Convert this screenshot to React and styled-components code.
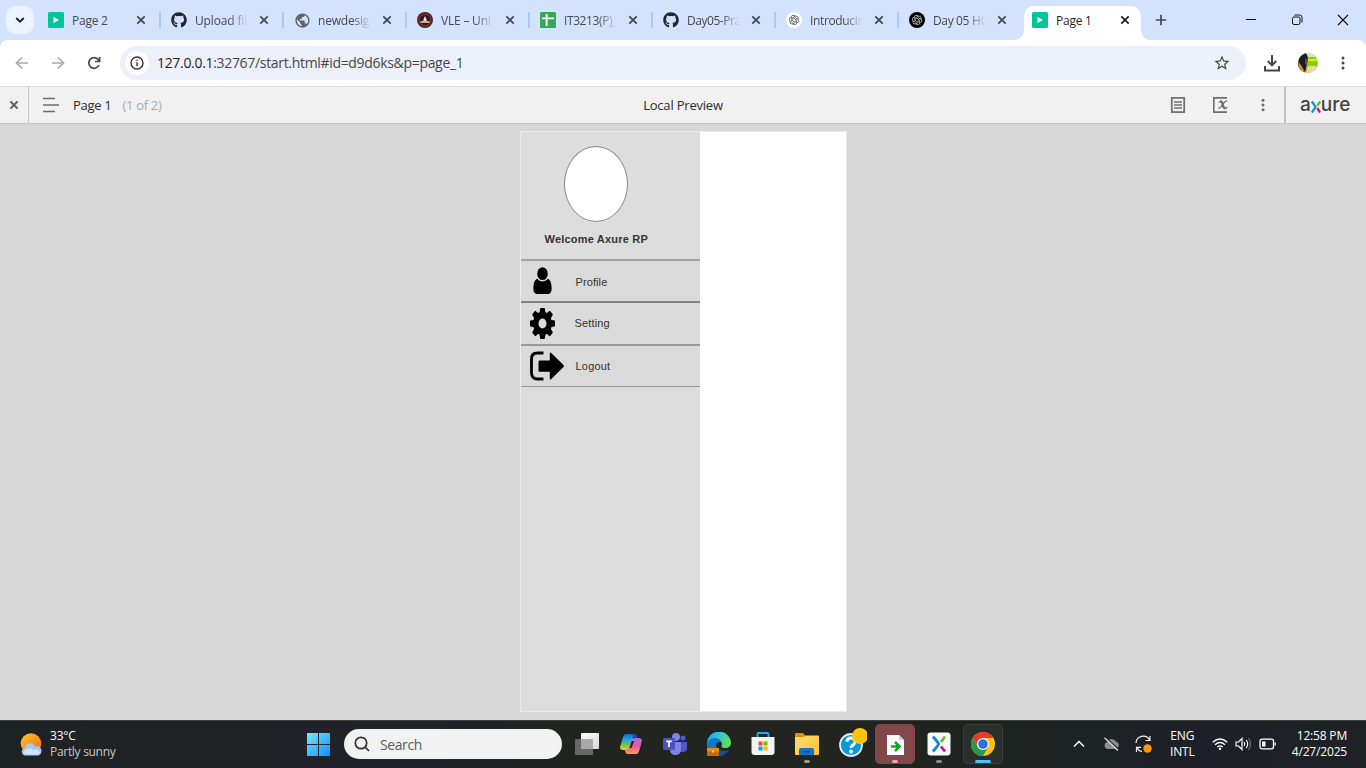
import React from "react";
import styled, { createGlobalStyle, css } from "styled-components";
import { FaGithub } from "react-icons/fa";
import { RiOpenaiFill } from "react-icons/ri";
import { MdPublic, MdStarBorder } from "react-icons/md";

const Global = createGlobalStyle`
  *, *::before, *::after { box-sizing: border-box; }
  html, body { margin: 0; padding: 0; overflow: hidden; }
  body { font-family: "Open Sans", "Noto Sans", sans-serif; font-size: 12px; color: #1f1f1f; }
  svg { display: block; flex: none; }
`;

const Screen = styled.div`
  width: 1366px;
  height: 768px;
  display: flex;
  flex-direction: column;
  overflow: hidden;
  background: #d7d7d7;
`;

/* ---------- tab strip ---------- */
const TabStrip = styled.header`
  height: 40px;
  display: flex;
  align-items: flex-start;
  padding: 6px 0 0 6px;
  background: #d3e2fd;
`;
const TabSearch = styled.div`
  width: 28px;
  height: 28px;
  margin-right: 6px;
  border-radius: 10px;
  background: #ecf2fe;
  display: grid;
  place-items: center;
`;
const TabBox = styled.div`
  position: relative;
  width: 123px;
  height: 34px;
  padding: 0 0 6px 8px;
  display: flex;
  align-items: center;
  ${(p) =>
    p.$active &&
    css`
      width: 117px;
      background: #fff;
      border-radius: 10px 10px 0 0;
      &::before,
      &::after {
        content: "";
        position: absolute;
        bottom: 0;
        width: 10px;
        height: 10px;
      }
      &::before {
        left: -10px;
        background: radial-gradient(circle at 0 0, transparent 9.5px, #fff 10.5px);
      }
      &::after {
        right: -10px;
        background: radial-gradient(circle at 100% 0, transparent 9.5px, #fff 10.5px);
      }
    `}
`;
const Favicon = styled.span`
  width: 16px;
  height: 16px;
  margin-right: 8px;
  flex: none;
`;
const TabTitle = styled.span`
  width: 53px;
  flex: none;
  white-space: nowrap;
  line-height: 18px;
  padding-top: 1px;
  font-size: 12px;
  letter-spacing: ${(p) => p.$ls}px;
  color: ${(p) => (p.$active ? "#1f1f1f" : "#46494d")};
  mask-image: ${(p) => (p.$fade ? "linear-gradient(90deg, #000 65%, transparent 100%)" : "none")};
`;
const TabClose = styled.span`
  margin-left: 8px;
`;
const Separator = styled.i`
  width: 2px;
  height: 16px;
  margin-left: 10px;
  border-radius: 1px;
  background: #a8c7fa;
`;
const NewTab = styled.span`
  margin: 8px 0 0 14px;
`;
const WindowControls = styled.div`
  margin-left: auto;
  display: flex;
  gap: 34px;
  padding: 8px 17px 0 0;
`;

/* ---------- address bar ---------- */
const ToolbarBack = styled.div`
  height: 46px;
  background: #d3e2fd;
`;
const Toolbar = styled.div`
  height: 46px;
  background: #fff;
  display: flex;
  align-items: center;
  padding-left: 14px;
  border-radius: 8px 8px 0 0;
`;
const NavIcons = styled.div`
  display: flex;
  gap: 20px;
  width: 106px;
`;
const AddressBar = styled.div`
  width: 1126px;
  height: 34px;
  border-radius: 17px;
  background: #ecf0fa;
  display: flex;
  align-items: center;
  padding: 0 15px 0 5px;
`;
const SiteInfo = styled.span`
  width: 24px;
  height: 24px;
  border-radius: 50%;
  background: #fff;
  display: grid;
  place-items: center;
`;
const Url = styled.span`
  margin-left: 8px;
  padding-bottom: 2px;
  flex: 1;
  font-size: 14px;
  letter-spacing: -0.32px;
  color: #474747;
  b {
    font-weight: 400;
    color: #1f1f1f;
  }
`;
const ToolbarActions = styled.div`
  display: flex;
  align-items: center;
  margin-left: 17px;
  gap: 17px;
`;

/* ---------- preview bar ---------- */
const PreviewBar = styled.div`
  height: 38px;
  border-top: 1px solid #dadada;
  border-bottom: 1px solid #c6c6c6;
  background: #f1f1f1;
  display: grid;
  grid-template-columns: 1fr auto 1fr;
  align-items: stretch;
  font-size: 13px;
`;
const BarSide = styled.div`
  display: flex;
  align-items: center;
  justify-content: ${(p) => (p.$end ? "flex-end" : "flex-start")};
`;
const ClosePane = styled.div`
  width: 29px;
  height: 100%;
  margin-right: 14px;
  border-right: 1px solid #c6c6c6;
  display: grid;
  place-items: center;
`;
const PageName = styled.span`
  margin-left: 14px;
  color: #2c2c2c;
  letter-spacing: -0.3px;
`;
const PageCount = styled.span`
  margin-left: 11px;
  color: #a5acb0;
  letter-spacing: -0.3px;
`;
const BarTitle = styled.span`
  align-self: center;
  color: #2c2c2c;
  letter-spacing: -0.2px;
`;
const BarTools = styled.div`
  display: flex;
  align-items: center;
  gap: 26px;
  padding-right: 13px;
`;
const Brand = styled.div`
  width: 82px;
  height: 100%;
  border-left: 2px solid #c0c0c0;
  display: flex;
  align-items: center;
  padding: 0 0 1px 14px;
  font: 500 19px/19px "Inter", sans-serif;
  letter-spacing: 0;
  color: #424346;
`;
const BrandMark = styled.span`
  padding-top: 4px;
`;

/* ---------- prototype canvas ---------- */
const Canvas = styled.main`
  height: 596px;
  display: flex;
  justify-content: center;
  padding-top: 7px;
  background: #d7d7d7;
`;
const Phone = styled.section`
  width: 327px;
  height: 581px;
  background: #fff;
  border: 1px solid #ececec;
`;
const Drawer = styled.aside`
  width: 179px;
  height: 579px;
  background: #ddd;
  display: flex;
  flex-direction: column;
`;
const DrawerHeader = styled.div`
  height: 127px;
  padding: 14px 0 0 43px;
`;
const Avatar = styled.div`
  width: 64px;
  height: 76px;
  border: 1px solid #868686;
  border-radius: 50%;
  background: #fff;
`;
const Welcome = styled.div`
  margin: 10px 0 0 -19px;
  font: bold 11px/14px "Liberation Sans", Arial, sans-serif;
  letter-spacing: 0.2px;
  white-space: nowrap;
  color: #333;
`;
const MenuItem = styled.div`
  height: ${(p) => p.$h}px;
  border-top: ${(p) => p.$line}px solid ${(p) => p.$tone};
  background: #dadada;
  display: flex;
  align-items: center;
  padding-left: 9px;
`;
const MenuIcon = styled.span`
  width: 45px;
  display: flex;
  padding-left: ${(p) => p.$inset || 0}px;
`;
const MenuLabel = styled.span`
  font: 11px/14px "Liberation Sans", Arial, sans-serif;
  letter-spacing: ${(p) => p.$ls}px;
  padding: ${(p) => p.$pad || "0"};
  color: #333;
`;
const MenuEnd = styled.div`
  height: 1px;
  background: #959595;
`;

/* ---------- taskbar ---------- */
const Taskbar = styled.footer`
  height: 48px;
  background: linear-gradient(90deg, #1d2322, #212227 20%, #202327 32%, #21241f 42%, #22241f 60%, #1e2421 75%, #1d2028 88%, #1e2225);
  box-shadow: inset 0 1px #3a3d3c;
  display: flex;
  align-items: center;
  color: #fff;
`;
const Weather = styled.div`
  width: 306px;
  display: flex;
  align-items: center;
  padding-left: 20px;
  gap: 7px;
`;
const TwoLine = styled.div`
  display: flex;
  flex-direction: column;
  align-items: ${(p) => p.$align || "flex-start"};
  font-size: 12px;
  line-height: 16px;
  white-space: nowrap;
  letter-spacing: ${(p) => p.$ls || 0}px;
`;
const Muted = styled.span`
  color: #c8c9c9;
  letter-spacing: -0.3px;
`;
const SearchBox = styled.div`
  width: 218px;
  height: 30px;
  margin-left: 14px;
  border-radius: 15px;
  background: #f2f2f2;
  display: flex;
  align-items: center;
  gap: 10px;
  padding-left: 10px;
  font-size: 14px;
  letter-spacing: -0.4px;
  color: #5c5c5c;
`;
const Apps = styled.div`
  display: flex;
  gap: 4px;
  margin-left: 5px;
`;
const AppSlot = styled.div`
  position: relative;
  width: 40px;
  height: 40px;
  border-radius: 5px;
  display: grid;
  place-items: center;
  background: ${(p) => p.$bg || "transparent"};
  box-shadow: ${(p) => (p.$ring ? "inset 0 0 0 1px #3c403c" : "none")};
  &::after {
    content: "";
    position: absolute;
    left: 50%;
    bottom: 1px;
    height: 3px;
    width: ${(p) => p.$markW || 6}px;
    transform: translateX(-50%);
    border-radius: 2px;
    background: ${(p) => p.$mark || "transparent"};
  }
`;
const Tray = styled.div`
  margin-left: auto;
  display: flex;
  align-items: center;
  padding-right: 19px;
`;
const TrayIcon = styled.span`
  margin-right: ${(p) => p.$gap}px;
`;
const TrayText = styled.div`
  margin-right: ${(p) => p.$gap}px;
`;

/* ---------- icons ---------- */
const Cross = ({ color = "#46494d", size = 16, w = 1.8, r = 3.7 }) => (
  <svg width={size} height={size} viewBox="-8 -8 16 16" stroke={color} strokeWidth={w}>
    <path d={`M${-r} ${-r}L${r} ${r}M${r} ${-r}L${-r} ${r}`} />
  </svg>
);
const Dots = ({ r = 1.5, gap = 5, color = "#474747" }) => (
  <svg width="16" height="16" viewBox="-8 -8 16 16" fill={color}>
    {[-gap, 0, gap].map((y) => (
      <circle key={y} cy={y} r={r} />
    ))}
  </svg>
);
const AxureFav = () => (
  <svg width="16" height="16" viewBox="0 0 16 16">
    <rect width="16" height="16" rx="1.5" fill="#00c49a" />
    <path d="M5.5 5v6L11 8z" fill="#fff" />
  </svg>
);
const VleFav = () => (
  <svg width="16" height="16" viewBox="0 0 16 16">
    <circle cx="8" cy="8" r="8" fill="#5c1f25" />
    <circle cx="8" cy="8" r="5.8" fill="#33162a" stroke="#8c5a45" strokeWidth=".6" />
    <path d="M8 3.5L5.6 9h4.8z" fill="#c98f3e" />
    <path d="M3.5 9.2h9v1.6h-9z" fill="#f1d7b0" />
    <path d="M7.2 5.7h1.6v3.3H7.2z" fill="#fff" />
  </svg>
);
const SheetFav = () => (
  <svg width="16" height="16" viewBox="0 0 16 16">
    <rect width="16" height="16" rx="1.5" fill="#34a853" />
    <path d="M2 6.3h12M6.6 2v12" stroke="#fff" strokeWidth="1.8" />
  </svg>
);
const OpenAiFav = ({ dark }) => (
  <svg width="16" height="16" viewBox="0 0 16 16">
    <circle cx="8" cy="8" r="8" fill={dark ? "#000" : "#fff"} />
    <RiOpenaiFill x="2" y="2" size={12} color={dark ? "#d8d8d8" : "#444"} />
  </svg>
);
const PersonIcon = () => (
  <svg width="19" height="28" viewBox="0 0 19 28">
    <ellipse cx="9.5" cy="6.7" rx="5.3" ry="6.4" />
    <path d="M4.3 11.800C1.500 12.700 0.400 16.800 0.400 21.500 0.400 25.300 2 27 4.500 27H14.500C17 27 18.600 25.300 18.600 21.500 18.600 16.800 17.500 12.700 14.700 11.800 13.300 13.500 11.500 14.400 9.500 14.400S5.700 13.500 4.300 11.800Z" />
  </svg>
);
const GearIcon = () => (
  <svg width="25" height="31" viewBox="-12 -12 24 24" preserveAspectRatio="none">
    <circle r="6.500" fill="none" stroke="#000" strokeWidth="5.200" />
    {[0, 45, 90, 135, 180, 225, 270, 315].map((a) => (
      <path key={a} transform={`rotate(${a})`} d="M-2.900 -7.500L-2.300 -11.500Q-2.200 -12 -1.700 -12H1.700Q2.200 -12 2.300 -11.500L2.900 -7.500Z" />
    ))}
  </svg>
);
const LogoutIcon = () => (
  <svg width="34" height="30" viewBox="0 0 34 30">
    <path d="M13.500 2H7.500Q1.500 2 1.500 8V21.500Q1.500 28 7.500 28H13.500" fill="none" stroke="#000" strokeWidth="2.800" />
    <path d="M9.600 9.500H19.800V2.500Q19.800 .7 21.300 2L33.500 14Q34.200 15 33.500 16L21.300 28Q19.800 29.300 19.800 27.500V20.700H9.600Q8.500 20.700 8.500 19.500V10.700Q8.500 9.500 9.600 9.500Z" />
  </svg>
);
const BrandX = () => (
  <svg width="10" height="12" viewBox="0 0 10 12" strokeWidth="2.300" fill="none">
    <path d="M.8 .5L4 5.200Q4.600 6 4 6.800L.8 11.500" stroke="#009cd9" />
    <path d="M9.200 .5L6.200 5" stroke="#6eb82c" />
    <path d="M6.200 7L9.200 11.500" stroke="#e4067e" />
  </svg>
);

const tabs = [
  { icon: <AxureFav />, title: "Page 2", ls: -0.25 },
  { icon: <FaGithub size={16} color="#22272e" />, title: "Upload fil", fade: true, ls: -0.15 },
  { icon: <MdPublic size={17} color="#5f6368" />, title: "newdesig", fade: true, ls: -0.2 },
  { icon: <VleFav />, title: "VLE – Uni", fade: true, ls: -0.2 },
  { icon: <SheetFav />, title: "IT3213(P)_", fade: true, ls: -0.4 },
  { icon: <FaGithub size={16} color="#22272e" />, title: "Day05-Pra", fade: true, ls: -0.45 },
  { icon: <OpenAiFav />, title: "Introducin", fade: true, ls: -0.35 },
  { icon: <OpenAiFav dark />, title: "Day 05 HC", fade: true, last: true, ls: -0.35 },
  { icon: <AxureFav />, title: "Page 1", active: true, ls: -0.25 },
];

function Tab({ icon, title, fade, active, last, ls }) {
  return (
    <TabBox $active={active}>
      <Favicon>{icon}</Favicon>
      <TabTitle $fade={fade} $active={active} $ls={ls}>{title}</TabTitle>
      <TabClose><Cross color={active ? "#1f1f1f" : "#46494d"} /></TabClose>
      {!active && !last && <Separator />}
    </TabBox>
  );
}

const TopChrome = () => (
  <>
    <TabStrip>
      <TabSearch>
        <svg width="10" height="6" viewBox="0 0 10 6" fill="none" stroke="#1f1f1f" strokeWidth="1.800"><path d="M1.200 1L5 4.700 8.800 1" /></svg>
      </TabSearch>
      {tabs.map((t) => <Tab key={t.title} {...t} />)}
      <NewTab>
        <svg width="12" height="12" viewBox="0 0 12 12" stroke="#474747" strokeWidth="1.700"><path d="M6 .8v10.400M.8 6h10.400" /></svg>
      </NewTab>
      <WindowControls>
        <svg width="12" height="12" viewBox="0 0 12 12" stroke="#111"><path d="M1 5.500h10" /></svg>
        <svg width="12" height="12" viewBox="0 0 12 12" stroke="#111" fill="none"><rect x="1.500" y="3" width="7.500" height="7.500" rx="1.500" /><path d="M3.500 1H8.500Q11 1 11 3.500V8.500" /></svg>
        <svg width="12" height="12" viewBox="0 0 12 12" stroke="#111" strokeWidth="1.100"><path d="M1 1l10 10M11 1L1 11" /></svg>
      </WindowControls>
    </TabStrip>
    <ToolbarBack>
      <Toolbar>
        <NavIcons>
          <svg width="16" height="16" viewBox="0 0 16 16" fill="none" stroke="#a9a9a9" strokeWidth="1.700"><path d="M14 8H3M8 2.500L2.500 8 8 13.500" /></svg>
          <svg width="16" height="16" viewBox="0 0 16 16" fill="none" stroke="#a9a9a9" strokeWidth="1.700"><path d="M2 8h11M8 2.500L13.500 8 8 13.500" /></svg>
          <svg width="16" height="16" viewBox="0 0 16 16" fill="none" stroke="#474747" strokeWidth="1.700"><path d="M13 10A5.300 5.300 0 1 1 12.300 4.800L13.400 6.200M13.600 2V6.500H9" /></svg>
        </NavIcons>
        <AddressBar>
          <SiteInfo>
            <svg width="14" height="14" viewBox="0 0 14 14" fill="none" stroke="#333" strokeWidth="1.400"><circle cx="7" cy="7" r="6" /><path d="M7 6.200v4M7 3.700v1.300" /></svg>
          </SiteInfo>
          <Url><b>127.0.0.1</b>:32767/start.html#id=d9d6ks&amp;p=page_1</Url>
          <MdStarBorder size={18} color="#474747" />
        </AddressBar>
        <ToolbarActions>
          <svg width="18" height="18" viewBox="0 0 18 18" fill="none" stroke="#474747" strokeWidth="2"><path d="M9 1v10M4.700 7L9 11.300 13.300 7M2 12v4.500h14V12" /></svg>
          <svg width="20" height="20" viewBox="0 0 20 20">
            <defs><clipPath id="face"><circle cx="10" cy="10" r="10" /></clipPath></defs>
            <g clipPath="url(#face)">
              <rect width="20" height="20" fill="#86cf14" />
              <path d="M8 0h12v4H8z" fill="#d9e8b8" />
              <path d="M9 6h11v2H9z" fill="#d2f41d" />
              <path d="M10 13q5-1 10 1v6H8z" fill="#f6cfa4" />
              <path d="M0 0h8q3 5 1 10l-2 10H0z" fill="#171b25" />
              <path d="M7 4q3 3 2 7l-2 1z" fill="#9b3430" />
              <path d="M0 8l3 4 4 7-5-1z" fill="#d98b36" />
            </g>
          </svg>
          <Dots />
        </ToolbarActions>
      </Toolbar>
    </ToolbarBack>
  </>
);

const Preview = () => (
  <PreviewBar>
    <BarSide>
      <ClosePane><Cross color="#5a5a5a" w={2} r={3.6} /></ClosePane>
      <svg width="16" height="16" viewBox="0 0 16 16" stroke="#6d6d6d" strokeWidth="1.700"><path d="M0 1.500h12M0 8h16M0 14.500h12" /></svg>
      <PageName>Page 1</PageName>
      <PageCount>(1 of 2)</PageCount>
    </BarSide>
    <BarTitle>Local Preview</BarTitle>
    <BarSide $end>
      <BarTools>
        <svg width="16" height="16" viewBox="0 0 16 16" fill="none" stroke="#6d6d6d" strokeWidth="1.700"><rect x="1.800" y=".9" width="12.400" height="14.200" /><path d="M4 5h8M4 8h8M4 11h8" strokeWidth="1.400" /></svg>
        <svg width="17" height="16" viewBox="0 0 17 16" fill="none" stroke="#6d6d6d" strokeWidth="1.600"><path d="M15 .9H1.800v14.200H15" /><path d="M8.300 4.400Q10 4 10.600 7.500T13.300 11.400" strokeWidth="2.200" /><path d="M15.300 4.500Q13.400 3.300 11 7.200T6.300 11.200M6.800 5.600Q7.400 4.500 8.800 4.400M13 11.600Q14.500 11.500 15.200 10" strokeWidth="1.200" /></svg>
        <Dots gap={4.700} color="#6d6d6d" />
      </BarTools>
      <Brand>a<BrandMark><BrandX /></BrandMark>ure</Brand>
    </BarSide>
  </PreviewBar>
);

const Prototype = () => (
  <Canvas>
    <Phone>
      <Drawer>
        <DrawerHeader>
          <Avatar />
          <Welcome>Welcome Axure RP</Welcome>
        </DrawerHeader>
        <MenuItem $h={42} $line={2} $tone="#a3a3a3"><MenuIcon $inset={3}><PersonIcon /></MenuIcon><MenuLabel $ls={0.1} $pad="2px 0 0 1px">Profile</MenuLabel></MenuItem>
        <MenuItem $h={43} $line={2} $tone="#838383"><MenuIcon><GearIcon /></MenuIcon><MenuLabel $ls={0.15} $pad="0 0 2px">Setting</MenuLabel></MenuItem>
        <MenuItem $h={42} $line={2} $tone="#999"><MenuIcon><LogoutIcon /></MenuIcon><MenuLabel $ls={0.2} $pad="0 0 0 1px">Logout</MenuLabel></MenuItem>
        <MenuEnd />
      </Drawer>
    </Phone>
  </Canvas>
);

const Gradient = ({ id, stops, x2 = 1, y2 = 1 }) => (
  <linearGradient id={id} x1="0" y1="0" x2={x2} y2={y2}>
    {stops.map((c, i) => <stop key={i} offset={i / (stops.length - 1)} stopColor={c} />)}
  </linearGradient>
);

const TaskApps = () => (
  <Apps>
    <AppSlot>
      <svg width="24" height="22" viewBox="0 0 24 22"><defs><Gradient id="tv" stops={["#fff", "#d8d8d8"]} /></defs><rect x="6" width="18" height="16" rx="1" fill="url(#tv)" /><rect y="6" width="18" height="16" rx="1" fill="#686868" /><path d="M6 6h12v10H6z" fill="#a9a9a9" /></svg>
    </AppSlot>
    <AppSlot>
      <svg width="22" height="22" viewBox="0 0 22 22">
        <defs><Gradient id="cpa" x2={0} stops={["#1b62d8", "#18a5dd", "#6fbe59", "#f5cc20"]} /><Gradient id="cpb" x2={0} stops={["#a86ae8", "#e85aa0", "#ff9955"]} /></defs>
        <path d="M6 1h8q2 0 2.600 2l.8 2.500h-4L10 14q-.8 3-4 3H3q-4 0-2.700-4L3.200 3.500Q4 1 6 1z" fill="url(#cpa)" />
        <path d="M13 1h1q2 0 2.600 2l1 3.200h-5z" fill="#194ab3" />
        <path d="M16 21H8q-2 0-2.600-2L4.700 17q3.500 0 4.600-3l2.400-7q.9-2 3.500-2h3.500q4 0 3 4l-2.700 9.500Q18 21 16 21z" fill="url(#cpb)" />
        <path d="M9.500 15l2.300-7h2.400l-2.700 7z" fill="#282328" />
      </svg>
    </AppSlot>
    <AppSlot>
      <svg width="24" height="22" viewBox="0 0 24 22"><circle cx="13" cy="4" r="4" fill="#7b83eb" /><circle cx="20" cy="5" r="2.600" fill="#5059c9" /><path d="M17 9h7v6q0 4-4 4h-3z" fill="#5059c9" /><path d="M7 9h11v7q0 6-5.500 6T7 16z" fill="#7b83eb" /><rect y="5" width="12" height="12" rx="1" fill="#4b53bc" /><path d="M3.200 8.300h5.600M6 8v6" stroke="#fff" strokeWidth="1.700" /></svg>
    </AppSlot>
    <AppSlot>
      <svg width="24" height="24" viewBox="0 0 24 24">
        <defs><Gradient id="ed" y2={0.3} stops={["#1a9fe0", "#35c1e0", "#62dd55"]} /></defs>
        <path d="M0 12A12 12 0 0 1 24 11Q24 16 18 16 14 16 14.500 13.500 16 12 14 10 11 7.500 7 9 2 11 1 18 0 15 0 12z" fill="url(#ed)" />
        <path d="M.3 14Q0 7 7 6q5-.5 7.500 4-4-1-5.500 3-1 5 4 8l2 2.600Q10 25 5 21.500 1 18 .3 14z" fill="#1277c9" />
        <path d="M10 12q-1 6 6 7 4 0 6.500-1.500Q19 24 12 24 7 19 10 12z" fill="#124f9c" />
        <rect y="16" width="12" height="8" fill="#c46b0b" /><path d="M0 16h12v3.500H0z" fill="#e68e16" /><path d="M5 18.500h2v2H5z" fill="#ffd250" />
      </svg>
    </AppSlot>
    <AppSlot>
      <svg width="24" height="24" viewBox="0 0 24 24"><path d="M6.500 6V2q0-1 1-1h9q1 0 1 1v4" fill="none" stroke="#23a8ea" strokeWidth="2" /><path d="M.5 5h23v15q0 3-3 3h-17q-3 0-3-3z" fill="#f4f4f4" /><path d="M7.500 9.500h4v4h-4z" fill="#f25022" /><path d="M12.500 9.500h4v4h-4z" fill="#7fba00" /><path d="M7.500 14.500h4v4h-4z" fill="#00a4ef" /><path d="M12.500 14.500h4v4h-4z" fill="#ffb900" /></svg>
    </AppSlot>
    <AppSlot $mark="#9a9a9a">
      <svg width="24" height="22" viewBox="0 0 24 22"><defs><Gradient id="fo" stops={["#ffdd79", "#fcc02b"]} /></defs><path d="M0 1q0-1 1-1h7l2.500 3H23q1 0 1 1v8H0z" fill="#d99300" /><path d="M0 4h9l1.500-1.500H23q1 0 1 1V21q0 1-1 1H1q-1 0-1-1z" fill="url(#fo)" /><path d="M4 22v-5q0-2 2-2h11q2 0 2 2v5z" fill="#1473c9" /><path d="M8 18h7v1.500H8z" fill="#0b559f" /></svg>
    </AppSlot>
    <AppSlot>
      <svg width="32" height="32" viewBox="0 0 32 32"><circle cx="16" cy="17" r="11" fill="#0898da" stroke="#d9eef8" strokeWidth="1.800" /><path d="M12 13.700Q12 10 16 10t4 3.500q0 2-2 3.500t-2 3" fill="none" stroke="#fff" strokeWidth="3" /><circle cx="16" cy="23.500" r="1.900" fill="#fff" /><circle cx="25" cy="8" r="8" fill="#ffc20e" /></svg>
    </AppSlot>
    <AppSlot $bg="#81474b" $mark="#ff9ba3">
      <svg width="17" height="22" viewBox="0 -2 17 22"><path d="M0 0h12l5 5v15H0z" fill="#fff" /><path d="M12 0v5h5z" fill="#cfcfcf" /><path d="M4 11.500h8M8 7l4.500 4.500L8 16" fill="none" stroke="#10a51c" strokeWidth="2.600" /></svg>
    </AppSlot>
    <AppSlot $mark="#8c8c8c">
      <svg width="24" height="24" viewBox="0 0 24 24" fill="none" strokeWidth="2.800"><rect x=".5" y=".5" width="23" height="23" rx="3" fill="#f8fafb" /><path d="M6 4.500L11.300 11q.8 1 0 2L6 19.500" stroke="#1688c8" /><path d="M18 4.500L14 10" stroke="#6eb82c" /><path d="M14 14.500l4 5" stroke="#e4067e" /></svg>
    </AppSlot>
    <AppSlot $bg="#2b2f2b" $ring $mark="#4cc2ff" $markW={16}>
      <svg width="24" height="24" viewBox="0 0 24 24"><circle cx="12" cy="12" r="12" fill="#fbc116" /><path d="M1.600 6A12 12 0 0 1 22.400 6H12L7 15z" fill="#e33b2e" /><path d="M1.600 6A12 12 0 0 0 12 24L17.200 15H6.800z" fill="#229a47" /><circle cx="12" cy="12" r="6" fill="#fff" /><circle cx="12" cy="12" r="4.800" fill="#2871e5" /></svg>
    </AppSlot>
  </Apps>
);

const BottomBar = () => (
  <Taskbar>
    <Weather>
      <svg width="23" height="23" viewBox="0 0 23 23"><defs><Gradient id="sun" stops={["#fbc52e", "#ee6b16"]} /></defs><circle cx="11" cy="10.500" r="10.300" fill="url(#sun)" /><path d="M5.500 22.500a3.800 3.800 0 0 1-.7-7.500A5.300 5.300 0 0 1 15 13.500a4.500 4.500 0 0 1 3.500 9z" fill="#a9c5f6" /><path d="M5 21.500a3 3 0 0 1 1-5 5 5 0 0 1 7 .5q5-2 7 3-1 1.500-3 1.500z" fill="#d4e2fb" /></svg>
      <TwoLine $ls={-0.2}><span>33°C</span><Muted>Partly sunny</Muted></TwoLine>
    </Weather>
    <svg width="24" height="24" viewBox="0 0 24 24"><defs><linearGradient id="win" gradientUnits="userSpaceOnUse" x1="0" y1="0" x2="24" y2="24"><stop stopColor="#7ceaff" /><stop offset="1" stopColor="#0793ff" /></linearGradient></defs><path d="M1 1h11v11H1zM13 1h11v11H13zM1 13h11v11H1zM13 13h11v11H13z" fill="url(#win)" /></svg>
    <SearchBox>
      <svg width="16" height="16" viewBox="0 0 16 16" fill="none" stroke="#303030" strokeWidth="1.700"><circle cx="7" cy="7" r="5.700" /><path d="M11 11l4 4" /></svg>
      <span>Search</span>
    </SearchBox>
    <TaskApps />
    <Tray>
      <TrayIcon $gap={18}><svg width="12" height="8" viewBox="0 0 12 8" fill="none" stroke="#fff" strokeWidth="1.500"><path d="M1 6.500l5-5 5 5" /></svg></TrayIcon>
      <TrayIcon $gap={15}><svg width="17" height="14" viewBox="0 0 17 14"><path d="M4 12a3.700 3.700 0 0 1 0-7 5 5 0 0 1 9-.5A4 4 0 0 1 13.500 12z" fill="#8b8d93" /><path d="M2.700 .8L16 12.700" stroke="#1d2028" strokeWidth="1.500" /><path d="M1.500 .8L15 13.500" stroke="#e5e5e5" strokeWidth="1.200" /></svg></TrayIcon>
      <TrayIcon $gap={18}><svg width="17" height="18" viewBox="0 0 17 18" fill="none" stroke="#f2f2f2" strokeWidth="1.200"><path d="M1 8A7.200 7.200 0 0 1 14.500 5M15 1v4.500h-4.500M7 16.500Q3.500 16 2 12.500M1.500 17v-4.700H6" /><circle cx="12.500" cy="13.500" r="4.200" fill="#ff960c" stroke="none" /></svg></TrayIcon>
      <TrayText $gap={17}><TwoLine $align="center" $ls={-0.1}><span>ENG</span><span>INTL</span></TwoLine></TrayText>
      <TrayIcon $gap={7}><svg width="16" height="12" viewBox="0 0 16 12" fill="none" stroke="#fff" strokeWidth="1.300"><path d="M.7 4.300Q8-2.300 15.300 4.300M3 6.700Q8 2.300 13 6.700M5.300 9Q8 6.800 10.700 9" /><circle cx="8" cy="10.700" r="1.200" fill="#fff" stroke="none" /></svg></TrayIcon>
      <TrayIcon $gap={7}><svg width="17" height="14" viewBox="0 0 17 14" fill="none" stroke="#fff" strokeWidth="1.200"><path d="M1 5h2.500L7 1.500v11L3.500 9H1zM9 5q1.500 2 0 4M11.200 3q3 4 0 8" /><path d="M13.500 1.200q4 5.800 0 11.600" stroke="#666b70" /></svg></TrayIcon>
      <TrayIcon $gap={16}><svg width="17" height="12" viewBox="0 0 17 12" fill="none" stroke="#fff" strokeWidth="1.300"><rect x="1" y="1.200" width="13.500" height="9.600" rx="2" /><path d="M16.200 4.500v3" /><path d="M3 3.500h3.500v5H3z" fill="#fff" stroke="none" /></svg></TrayIcon>
      <TwoLine $align="flex-end" $ls={-0.18}><span>12:58 PM</span><span>4/27/2025</span></TwoLine>
    </Tray>
  </Taskbar>
);

export default function App() {
  return (
    <Screen>
      <Global />
      <TopChrome />
      <Preview />
      <Prototype />
      <BottomBar />
    </Screen>
  );
}
